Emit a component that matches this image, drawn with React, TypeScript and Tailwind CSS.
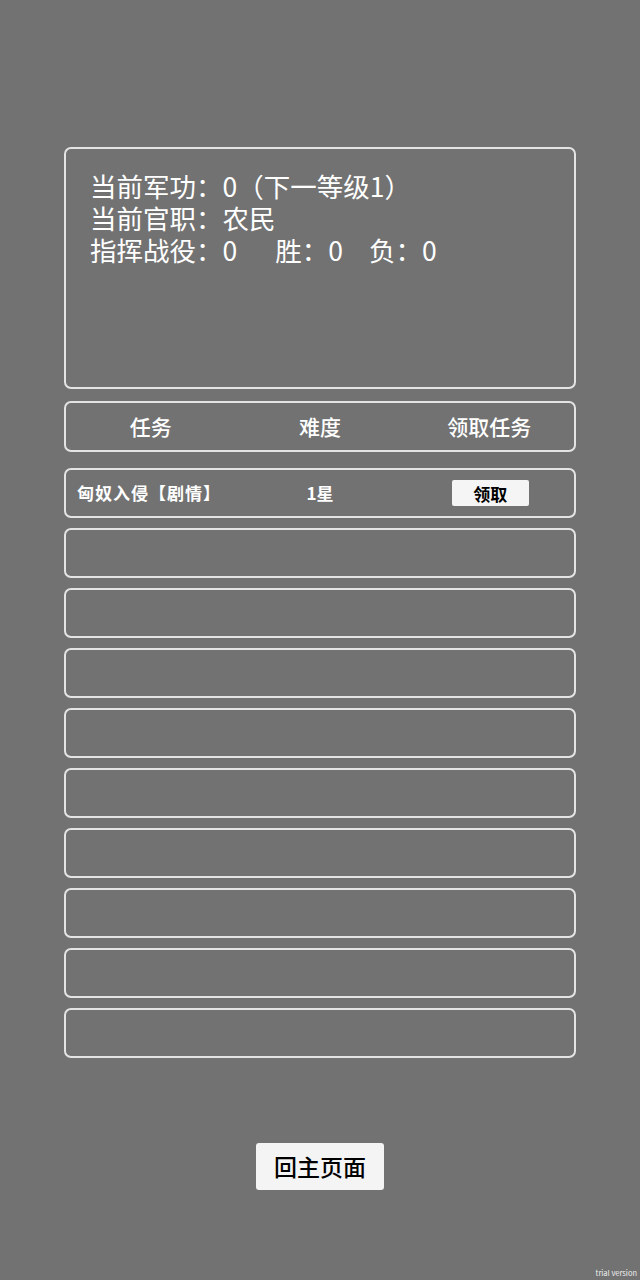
const FONT = { fontFamily: '"Noto Sans CJK SC", "Noto Sans", sans-serif' };

const emptyRows = Array.from({ length: 9 }, (_, i) => i);

export default function App() {
  return (
    <div
      className="relative w-[640px] h-[1280px] bg-[#727272] text-white flex flex-col items-center"
      style={FONT}
    >
      {/* status panel */}
      <div className="mt-[147px] w-[512px] h-[242px] rounded-[7px] border-[2.5px] border-[#e4e4e4] pl-[24px] pt-[21px] text-[26.5px] leading-[32px]">
        <div>当前军功：0（下一等级1）</div>
        <div>当前官职：农民</div>
        <div>
          指挥战役：0<span className="ml-[38px]">胜：0</span>
          <span className="ml-[26px]">负：0</span>
        </div>
      </div>

      {/* header */}
      <div className="mt-[12px] w-[512px] h-[51px] rounded-[7px] border-[2.5px] border-[#e4e4e4] grid grid-cols-3 items-center text-[21px] font-medium">
        <div className="text-center">任务</div>
        <div className="text-center">难度</div>
        <div className="text-center">领取任务</div>
      </div>

      {/* task rows */}
      <div className="mt-[16px] w-[512px] flex flex-col gap-[10px]">
        <div className="h-[50px] rounded-[7px] border-[2.5px] border-[#e4e4e4] grid grid-cols-3 items-center text-[17px] font-bold">
          <div className="pl-[11px] whitespace-nowrap tracking-[1px]">匈奴入侵【剧情】</div>
          <div className="text-center">1星</div>
          <div className="flex justify-center">
            <button className="ml-[2px] w-[77px] h-[26px] rounded-[2px] bg-[#f5f5f5] text-black text-[17px] font-bold leading-none">
              领取
            </button>
          </div>
        </div>
        {emptyRows.map((i) => (
          <div
            key={i}
            className="h-[50px] rounded-[7px] border-[2.5px] border-[#e4e4e4]"
          />
        ))}
      </div>

      {/* back button */}
      <button className="mt-[85px] w-[128px] h-[47px] rounded-[3px] bg-[#f4f4f4] text-black text-[23px] font-medium">
        回主页面
      </button>

      <div className="absolute right-[3px] bottom-[2px] text-[7.5px] text-[#f0f0f0]">
        trial version
      </div>
    </div>
  );
}
